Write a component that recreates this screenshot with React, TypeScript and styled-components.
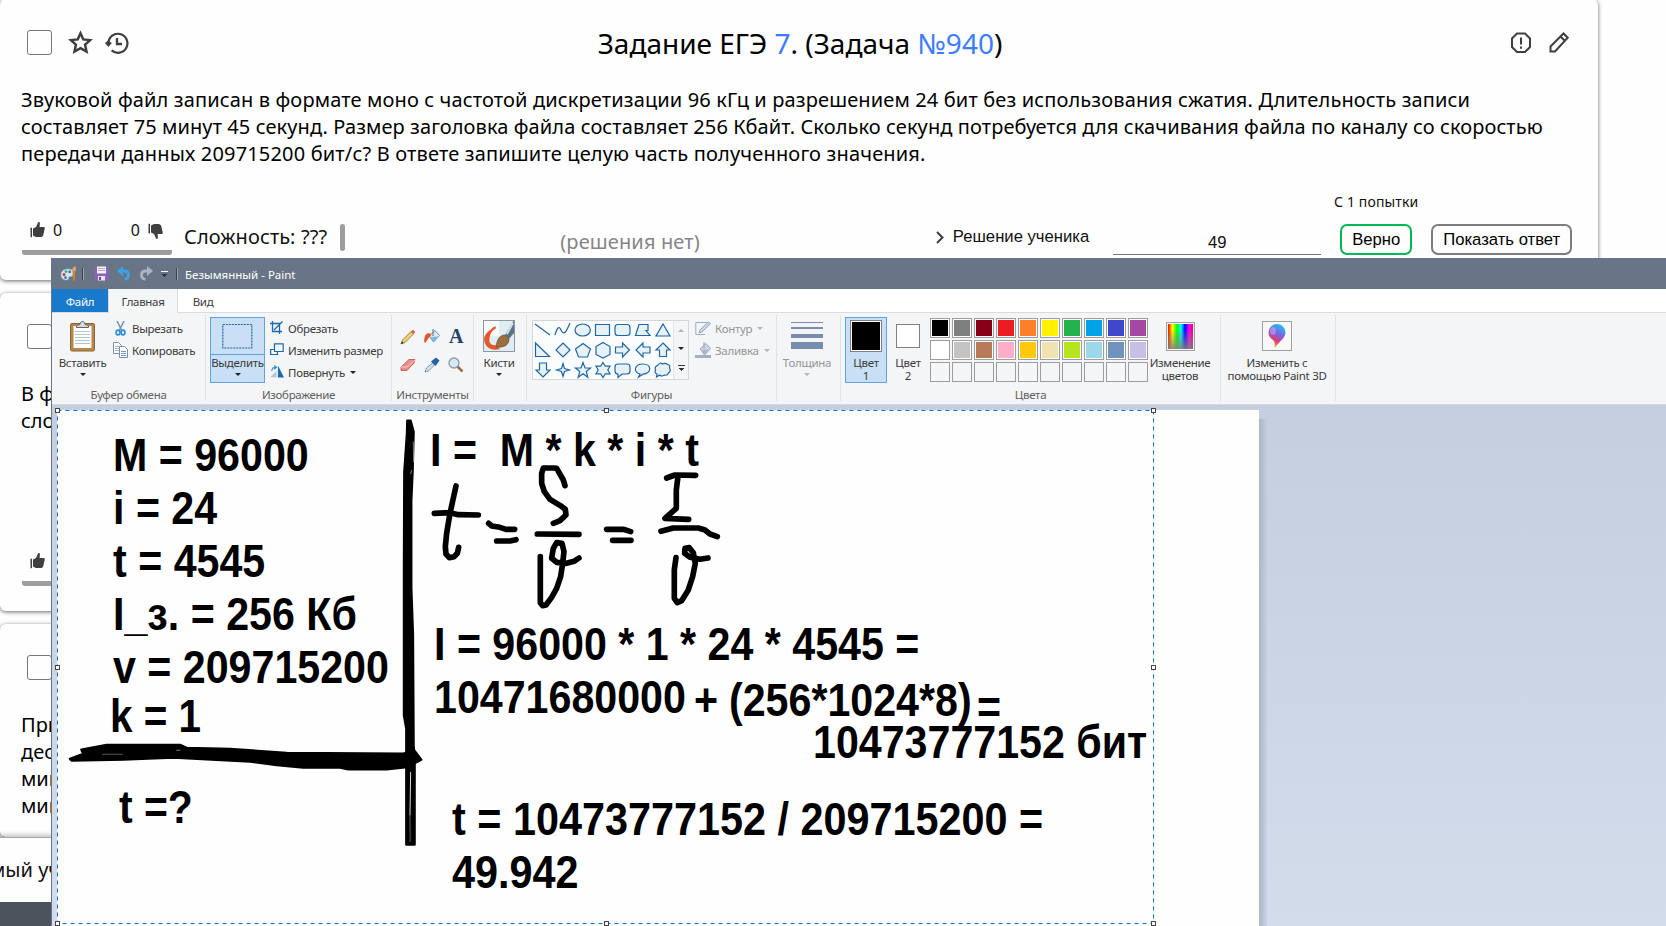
import React from 'react';
import styled, { createGlobalStyle, css } from 'styled-components';

const Global = createGlobalStyle`
  * { box-sizing: border-box; }
  body { margin: 0; background: #fefefe; font-family: "Noto Sans", sans-serif; }
  svg { display: block; flex: none; }
`;

const Page = styled.div`
  position: relative;
  width: 1666px;
  height: 926px;
  overflow: hidden;
  display: flex;
  flex-direction: column;
  gap: 13px;
  color: #111;
`;

/* ---------- task cards ---------- */

const Card = styled.section<{ $height: number; $first?: boolean }>`
  flex: none;
  width: 1598px;
  height: ${p => p.$height}px;
  margin-top: ${p => (p.$first ? '-1px' : '0')};
  padding: 0 22px 25px;
  display: flex;
  flex-direction: column;
  background: #fefefe;
  border-radius: 6px;
  box-shadow: 0 1px 4px rgba(0, 0, 0, 0.6);
`;

const CardHead = styled.header`
  flex: none;
  display: grid;
  grid-template-columns: 1fr auto 1fr;
  align-items: center;
  height: 87px;
  padding: 0 7px 0 5px;
`;

const HeadTools = styled.div<{ $end?: boolean }>`
  display: flex;
  align-items: center;
  gap: ${p => (p.$end ? 17 : 12)}px;
  justify-content: ${p => (p.$end ? 'flex-end' : 'flex-start')};
`;

const Check = styled.span`
  width: 25px;
  height: 25px;
  margin-right: 4px;
  border: 1px solid #767676;
  border-radius: 3px;
`;

const Title = styled.h1`
  margin: 0 0 0 4px;
  font-size: 28px;
  font-weight: 400;
  line-height: 40px;
  color: #000;
  white-space: nowrap;
`;

const Blue = styled.span`
  color: #3c7dff;
`;

const TaskText = styled.p`
  flex: none;
  margin: 0 0 0 -1px;
  font-size: 20px;
  line-height: 27px;
  white-space: pre;
  color: #000;
`;

const Line = styled.span<{ $ls: number }>`
  display: block;
  letter-spacing: ${p => p.$ls}px;
`;

const CardFoot = styled.footer`
  display: flex;
  align-items: flex-end;
  margin-top: auto;
  height: 62px;
`;

const Votes = styled.div`
  width: 150px;
  height: 34px;
  padding: 1px 9px 0 8px;
  border-bottom: 5px solid #9d9d9d;
  border-radius: 0 0 3px 3px;
  display: flex;
  justify-content: space-between;
  align-items: flex-start;
  font-size: 16px;
  line-height: 17px;
`;

const Vote = styled.span`
  display: flex;
  gap: 8px;
`;

const Difficulty = styled.div`
  display: flex;
  gap: 13px;
  align-items: center;
  margin: 0 0 4px 12px;
  font-size: 20px;
  line-height: 28px;
  letter-spacing: 0.1px;
`;

const Level = styled.span`
  width: 5px;
  height: 27px;
  border-radius: 3px;
  background: #9d9d9d;
`;

const NoSolution = styled.div`
  margin: 0 0 0 215px;
  font-size: 20px;
  line-height: 27px;
  letter-spacing: 0.13px;
  color: #858585;
`;

const StudentLink = styled.div`
  display: flex;
  align-items: center;
  gap: 9px;
  margin: 0 0 8px 236px;
  font: 16.67px/20px "Liberation Sans", sans-serif;
  white-space: nowrap;
`;

const Answer = styled.div`
  width: 208px;
  margin-left: 24px;
  padding-bottom: 1px;
  border-bottom: 1px solid #767676;
  font: 16.67px/20px "Liberation Sans", sans-serif;
  text-align: center;
`;

const Attempt = styled.div`
  display: flex;
  flex-direction: column;
  align-items: center;
  gap: 13px;
  width: 84px;
  margin: 0 13px;
  font-size: 14px;
  line-height: 19px;
  letter-spacing: 0.15px;
  white-space: nowrap;
`;

const Button = styled.button<{ $tone: string; $width: number }>`
  width: ${p => p.$width}px;
  height: 31px;
  padding: 0;
  border: 2px solid ${p => p.$tone};
  border-radius: 7px;
  background: none;
  font: 16.67px/20px "Liberation Sans", sans-serif;
  color: #000;
  white-space: nowrap;
`;

const SiteFooter = styled.div`
  flex: none;
  height: 89px;
  margin-top: -13px;
  border-top: 1px solid #aaa;
  border-bottom: 24px solid #4c535d;
  background: #fefefe;
  box-shadow: 0 -2px 5px rgba(0, 0, 0, 0.25);
  font-size: 20px;
  line-height: 27px;
  padding-top: 18px;
`;

const FooterText = styled.span`
  display: block;
  margin-left: -10px;
`;

/* ---------- Paint window ---------- */

const Window = styled.div`
  position: absolute;
  left: 51px;
  top: 258px;
  width: 1640px;
  height: 700px;
  border-left: 1px solid #687587;
  display: flex;
  flex-direction: column;
  font-size: 11.5px;
  line-height: 13px;
  letter-spacing: -0.3px;
  color: #3b3b3b;
`;

const TitleBar = styled.div`
  flex: none;
  height: 31px;
  display: flex;
  align-items: center;
  padding-left: 8px;
  background: #687587;
  color: #fff;
`;

const WindowTitle = styled.span`
  padding-top: 1px;
  letter-spacing: 0;
`;

const QuickTools = styled.div`
  display: flex;
  align-items: center;
  gap: 8px;
`;

const BarSep = styled.i<{ $ml: number; $mr: number }>`
  width: 2px;
  height: 12px;
  margin: 0 ${p => p.$mr}px 0 ${p => p.$ml}px;
  border-left: 1px solid #384350;
  background: #9aa5b4;
`;

const TabRow = styled.div`
  flex: none;
  height: 24px;
  display: flex;
  background: #fff;
  border-bottom: 1px solid #dadbdc;
`;

const Tab = styled.div<{ $kind: 'file' | 'active' | 'plain'; $width: number }>`
  width: ${p => p.$width}px;
  height: ${p => (p.$kind === 'active' ? 24 : 23)}px;
  line-height: 25px;
  text-align: center;
  ${p => p.$kind === 'file' && css`background: #1979ca; color: #fff;`}
  ${p => p.$kind === 'active' && css`
    background: #f4f6f8;
    border: solid #dadbdc;
    border-width: 0 1px;
  `}
`;

const Ribbon = styled.div`
  flex: none;
  height: 92px;
  display: flex;
  background: #f4f5f7;
  border-bottom: 1px solid #d6d8dc;
  padding: 2px 0 3px;
`;

const Group = styled.div<{ $width: number; $pad: number }>`
  flex: none;
  width: ${p => p.$width}px;
  padding-left: ${p => p.$pad}px;
  border-right: 1px solid #e0e2e4;
  display: flex;
  flex-direction: column;
`;

const GroupBody = styled.div`
  flex: 1;
  display: flex;
  align-items: flex-start;
  padding-top: 2px;
`;

const GroupLabel = styled.div<{ $pad: number }>`
  height: 13px;
  margin-left: -${p => p.$pad}px;
  text-align: center;
  color: #606060;
`;

const BigButton = styled.div<{ $width: number; $active?: boolean; $off?: boolean }>`
  flex: none;
  width: ${p => p.$width}px;
  height: 66px;
  display: flex;
  flex-direction: column;
  align-items: center;
  white-space: pre;
  text-align: center;
  border: 1px solid transparent;
  color: ${p => (p.$off ? '#959595' : '#3b3b3b')};
  ${p => p.$active && css`background: #c9dff5; border-color: #62a2e4;`}
`;

const BigIcon = styled.div<{ $line?: boolean }>`
  align-self: stretch;
  height: 37px;
  display: flex;
  align-items: center;
  justify-content: center;
  margin-bottom: 1px;
  border-bottom: 1px solid ${p => (p.$line ? '#62a2e4' : 'transparent')};
`;

const Arrow = styled.i<{ $off?: boolean; $mt?: number; $up?: boolean; $bar?: boolean; $light?: boolean }>`
  width: ${p => (p.$bar ? 7 : 0)}px;
  height: ${p => (p.$bar ? 6 : 0)}px;
  margin-top: ${p => p.$mt ?? 0}px;
  ${p => p.$bar
    ? css`
      border-top: 1px solid ${p.$light ? '#fff' : '#333'};
      background: linear-gradient(#333, #333) 50% 2px / 5px 1px no-repeat,
        linear-gradient(#333, #333) 50% 3px / 3px 1px no-repeat,
        linear-gradient(#333, #333) 50% 4px / 1px 1px no-repeat;
    `
    : css`
      border: 3px solid transparent;
      border-bottom-width: 0;
      border-top-color: ${p.$off ? '#b4b4b4' : '#222'};
    `}
  ${p => p.$up && css`transform: rotate(180deg);`}
`;

const Rows = styled.div<{ $ml: number }>`
  display: flex;
  flex-direction: column;
  margin-left: ${p => p.$ml}px;
`;

const RowItem = styled.div<{ $off?: boolean }>`
  height: 22px;
  display: flex;
  align-items: center;
  gap: 4px;
  white-space: nowrap;
  color: ${p => (p.$off ? '#959595' : '#3b3b3b')};
  ${Arrow} { margin-left: 1px; }
`;

const ToolGrid = styled.div`
  display: grid;
  grid-template-columns: repeat(3, 24px);
  grid-auto-rows: 28px;
  place-items: center;
  padding-top: 6px;
`;

const Gallery = styled.div`
  display: flex;
  width: 157px;
  height: 60px;
  margin-top: 3px;
  border: 1px solid #d4d6d9;
  background: #fbfcfd;
`;

const ShapeGrid = styled.div`
  display: grid;
  grid-template-columns: repeat(7, 20px);
  grid-auto-rows: 20px;
  width: 141px;
  margin-top: -1px;
  border-right: 1px solid #e2e4e6;
`;

const Scroll = styled.div`
  width: 14px;
  display: flex;
  flex-direction: column;
  justify-content: space-around;
  align-items: center;
  background: #f4f5f7;
`;

const Swatch = styled.i<{ $color?: string; $size: number; $big?: boolean }>`
  width: ${p => p.$size}px;
  height: ${p => p.$size}px;
  padding: ${p => (p.$big ? 1 : 1)}px;
  border: 1px solid ${p => (p.$big ? '#808080' : '#9d9d9d')};
  background: ${p => p.$color || 'transparent'} content-box;
  box-shadow: inset 0 0 0 1px ${p => (p.$color ? '#fdfdfd' : 'transparent')};
`;

const Palette = styled.div`
  display: grid;
  grid-template-columns: repeat(10, 20px);
  grid-auto-rows: 20px;
  gap: 2px;
  margin: 1px 0 0 1px;
`;

const Framed = styled.div<{ $size: number }>`
  width: ${p => p.$size}px;
  height: ${p => p.$size}px;
  padding: 1px;
  border: 1px solid #a0a0a0;
  background: #f8f8f8;
  display: flex;
  align-items: center;
  justify-content: center;
`;

const Rainbow = styled.i`
  width: 25px;
  height: 25px;
  background: linear-gradient(transparent 20%, rgba(128, 128, 128, 0.85)),
    linear-gradient(90deg, #f00, #ff0 18%, #0f0 36%, #0ff 52%, #00f 68%, #f0f 85%, #f04);
`;

const Workspace = styled.div`
  flex: 1;
  padding: 5px 0 0 5px;
  background: linear-gradient(#c5cedf, #d3dceb 520px);
`;

const Sheet = styled.div`
  position: relative;
  width: 1202px;
  height: 560px;
  background: #fefefe;
`;

const SheetShadow = styled.i`
  position: absolute;
  left: 1202px;
  top: 9px;
  width: 8px;
  height: 560px;
  background: linear-gradient(90deg, #a9b7c9, rgba(190, 200, 217, 0.4));
`;

const Ink = styled.svg`
  position: absolute;
  left: 0;
  top: 0;
`;

const Note = styled.div<{ $x: number; $base: number; $sx?: number }>`
  position: absolute;
  left: ${p => p.$x - 57}px;
  top: ${p => p.$base - 451.4}px;
  font: bold 47px/53px "Liberation Sans", sans-serif;
  letter-spacing: 0;
  white-space: pre;
  color: #000;
  transform: scaleX(${p => p.$sx ?? 0.876});
  transform-origin: 0 0;
`;

const Selection = styled.svg`
  position: absolute;
  left: -4px;
  top: -4px;
`;

/* ---------- icons ---------- */

const Thumb = ({ down }: { down?: boolean }) => (
  <svg width="15" height="17" viewBox="0 0 15 17" fill="#3f3f3f">
    <g transform={down ? 'matrix(1 0 0 -1 0 17)' : undefined}>
      <path d="M.4 6 2 5.600V15l-1.400.5zM3 6.600 6 5l2-4.600c.3-.6 1.700-.5 1.900.6L9.600 5h3.900c1 0 1.400.8 1.200 1.800l-1.300 5.700c-.4 1.800-1.400 2.600-3 2.600H6L3 13.600z" />
    </g>
  </svg>
);

const Star = () => (
  <svg width="25" height="25" viewBox="0 0 25 25" fill="none" stroke="#3f3f3f" strokeWidth="2.500">
    <path d="M12.500 3.200l2.800 6.200 6.800.7-5 4.600 1.400 6.800-6-3.400-6 3.400 1.400-6.800-5-4.600 6.800-.7z" />
  </svg>
);

const History = () => (
  <svg width="24" height="24" viewBox="0 0 24 24" fill="none" stroke="#3f3f3f" strokeWidth="2.200">
    <path d="M3.400 12.500A9.500 9.500 0 1 1 6.600 19.400" />
    <path d="M12 7v6h5" strokeWidth="2.300" />
    <path d="M0 12l3.400-2.500 3.400 2.500-3.400 4z" fill="#3f3f3f" stroke="none" />
  </svg>
);

const Alert = () => (
  <svg width="22" height="22" viewBox="0 0 22 22" fill="none" stroke="#3f3f3f" strokeWidth="2">
    <path d="M7 1.500h8l5 5v8.500l-5 5H7l-5-5V6.500z" />
    <path d="M11 5.500v7M11 14.500v2.200" />
  </svg>
);

const Pencil = () => (
  <svg width="20" height="21" viewBox="0 0 20 21" fill="none" stroke="#3f3f3f" strokeWidth="2">
    <path d="M1.500 19.500v-5L14.500 1.500l4.200 4.200L6 19.500zM11.500 4.500l4 4" />
  </svg>
);

const PaintLogo = () => (
  <svg width="17" height="17" viewBox="0 0 17 17">
    <path d="M1 10c0-4 3-6 7-6 5 0 6 3 5 6-1 2-3 1-4 2s0 3-2 3c-4 0-6-2-6-5z" fill="#cfe8f5" stroke="#8fb3c8" strokeWidth=".6" />
    <circle cx="4" cy="9.500" r="1.500" fill="#d33" /><circle cx="6" cy="6.600" r="1.400" fill="#4a4" />
    <circle cx="9.700" cy="6.800" r="1.500" fill="#47c" /><circle cx="5.500" cy="12.600" r="1.300" fill="#36b" />
    <path d="M12.500 6h2.800l-.4 9c-.3 1.300-1.600 1.300-1.900 0z" fill="#d97f26" />
    <path d="M12.300 6c-.4-2 .5-3.500 2.900-5 .9 2 .9 3.500.3 5z" fill="#e8a95e" />
  </svg>
);

const Save = () => (
  <svg width="15" height="15" viewBox="0 0 15 15">
    <path d="M.5.5h14v14h-12l-2-2z" fill="#8a63b4" /><path d="M3 .5h9v7H3z" fill="#f5f3f8" />
    <path d="M4 2.500h7M4 4.500h7" stroke="#b9a7cc" /><path d="M4 10h7v4.500H4z" fill="#e8e4ee" /><path d="M5 11h2v3H5z" fill="#6b4796" />
  </svg>
);

const Undo = ({ redo }: { redo?: boolean }) => (
  <svg width="14" height="15" viewBox="0 0 14 15">
    <g transform={redo ? 'matrix(-1 0 0 1 14 0)' : undefined}>
      <path d="M3 5h4c3 0 4.500 1.500 4.500 4 0 2.500-1.500 4-4 4.500" fill="none" stroke={redo ? '#a7b4c8' : '#39a5e6'} strokeWidth="2.800" />
      <path d="M0 5l6-5v10z" fill={redo ? '#a7b4c8' : '#39a5e6'} />
    </g>
  </svg>
);

const Clipboard = () => (
  <svg width="26" height="31" viewBox="0 0 26 31">
    <rect x=".5" y="2.500" width="24" height="27.500" rx="1.500" fill="#b5884c" stroke="#8d6431" />
    <path d="M3.500 5h18v22h-18z" fill="#fdfdfd" />
    <path d="M5 10.500h15M5 13.500h15M5 16.500h15M5 19.500h15M5 22.500h15" stroke="#b4c3d0" />
    <path d="M6.500 6.500V4.500L10 3.500c0-4 5-4 5 0l3.500 1v2z" fill="#d9dcde" stroke="#666" />
  </svg>
);

const Scissors = () => (
  <svg width="15" height="15" viewBox="0 0 15 15" fill="none">
    <path d="M4 0l4.500 9M11 0L6.500 9" stroke="#7d93a8" strokeWidth="1.600" />
    <ellipse cx="5" cy="11.500" rx="1.900" ry="2.400" stroke="#2b8fd8" strokeWidth="1.700" /><ellipse cx="10" cy="11.500" rx="1.900" ry="2.400" stroke="#2b8fd8" strokeWidth="1.700" />
  </svg>
);

const Copy = () => (
  <svg width="15" height="16" viewBox="0 0 15 16" stroke="#7d8ea5">
    <path d="M.5.500h5l3 3v8h-8z" fill="#fff" /><path d="M2 4.500h4M2 6.500h4M2 8.500h4" stroke="#9db4cf" />
    <path d="M6.500 4.500h5l3 3v8h-8z" fill="#fff" /><path d="M8 9.500h5M8 11.500h5M8 13.500h5" stroke="#6b9bd1" />
  </svg>
);

const Marquee = () => (
  <svg width="31" height="25" viewBox="0 0 31 25"><rect x=".8" y=".5" width="29" height="23.500" fill="none" stroke="#1d62a5" strokeWidth="1.200" strokeDasharray="2 1" /></svg>
);

const Crop = () => (
  <svg width="14" height="14" viewBox="0 0 14 14" fill="none" stroke="#1d6aa8" strokeWidth="1.300"><path d="M2.500 0v10.500H12M0 2.500h9.500V13M4 9l8.500-8.500" /></svg>
);
const Resize = () => (
  <svg width="14" height="14" viewBox="0 0 14 14" fill="#f4f9fd" stroke="#1d6aa8" strokeWidth="1.200"><path d="M.6 6.500h6.800v5H.6z" /><path d="M4.500.8h8.700v7.700H4.500z" /></svg>
);
const Rotate = () => (
  <svg width="14" height="14" viewBox="0 0 15 14"><path d="M0 12.500L7 6v6.500z" fill="#b9c4cf" /><path d="M8.500 0v13H15z" fill="#1d6aa8" /><path d="M2 6c0-3 1.500-4 4-4M4.500 0l2.500 2-2.500 2" stroke="#2b8fd8" fill="none" strokeWidth="1.200" /></svg>
);

const PencilTool = () => (
  <svg width="16" height="16" viewBox="0 0 16 16"><path d="M1 15l1.500-4L11 2.500l2.500 2.500L5 13.500z" fill="#f4d06a" stroke="#7a6a45" strokeWidth=".8" /><path d="M1 15l1-2.500 1.500 1.500z" fill="#222" /><path d="M11 2.500L13 .800 15.300 3l-1.800 2z" fill="#d65c50" /></svg>
);
const Bucket = ({ off }: { off?: boolean }) => (
  <svg width="16" height="16" viewBox="0 0 16 16">
    <path d="M5 7l6-5.500 4.500 5-6 6.500z" fill={off ? '#cfd7e4' : '#dbeaf5'} stroke={off ? '#93a1b8' : '#5d87a8'} strokeWidth=".9" />
    <path d="M7 8l8-.5-5.500 6z" fill={off ? '#a9b6cb' : '#7cb8e0'} /><path d="M9 0v7" stroke={off ? '#93a1b8' : '#5c6e7d'} />
    {off ? <path d="M0 13h16v3H0z" fill="#a3afc6" /> : <path d="M6.500 4.500C3 3.500 0 5 .2 13.500c2.500 1 3-4.500 6.800-6.500z" fill="#e3572d" />}
  </svg>
);
const Eraser = () => (
  <svg width="16" height="14" viewBox="0 0 16 14"><path d="M1 9l8-7.500h6L14 5 7 12.500H1z" fill="#ee8d89" stroke="#ad5450" strokeWidth=".8" /><path d="M1 9h6l8-7" stroke="#fbc8c5" fill="none" /></svg>
);
const Picker = () => (
  <svg width="16" height="16" viewBox="0 0 16 16"><path d="M1 15l1.500-4 6-5 2 2-6 6z" fill="#cfe4f2" stroke="#6a7d8c" strokeWidth=".8" /><path d="M7 4.500L12 .5l3.500 3-4 5.500z" fill="#22639f" /></svg>
);
const Magnifier = () => (
  <svg width="16" height="16" viewBox="0 0 16 16"><path d="M9.500 9.500l5 5" stroke="#9c6b46" strokeWidth="2.500" /><circle cx="6" cy="6" r="5" fill="#d3ebf8" stroke="#8a9aa6" strokeWidth="1.300" /></svg>
);

const Brush = () => (
  <svg width="32" height="32" viewBox="0 0 32 32">
    <rect x=".5" y=".5" width="31" height="31" fill="#dfeef4" stroke="#8f979e" />
    <path d="M1 1h15v15H1z" fill="#f7fafb" />
    <path d="M12.500 6c-1.500 1.500-3 1-4 3C4 12 0 16 1.500 22c2 7 9 9 16 7-3-1-3-4-4-4-5 1-8-2-7-7C7 14 9 11 11 9.500c2 0 2-2 1.500-3.500z" fill="#e8562a" />
    <path d="M22 15l8.500-14H31v12l-5 6z" fill="#5b7188" /><path d="M24 14l6-11" stroke="#dbe4ec" strokeWidth="1.800" />
    <path d="M13 27c1-8 4-12 9-12l4 4c0 6-5 9-13 8z" fill="#9b6f3f" stroke="#6d4a26" strokeWidth=".7" />
  </svg>
);

const shapes = [
  'M2 4L17 15', 'M2 15c2-7 4-10 6-5 3 7 6 0 9-7',
  'M2 10a7.700 6 0 1 0 15.400 0a7.700 6 0 1 0-15.400 0', 'M2.500 4.500h14v11h-14z',
  'M5 4.500h9q3 0 3 3v5q0 3-3 3H5q-3 0-3-3v-5q0-3 3-3z', 'M6 4.500h9v6h-2l4 5H2.500z', 'M10 4L17 16H3z',
  'M2.500 3v13.500h14z', 'M10 3l7 7-7 7-7-7z', 'M10 3.500l7.500 5.500-3 8h-9l-3-8z', 'M10 2.500l7 4v8l-7 3.500-7-3.500v-8z',
  'M2.500 7h7V3l7 7-7 7v-4h-7z', 'M17 7h-7V3l-7 7 7 7v-4h7z', 'M10 3l7 7h-3.500v6.500h-7V10H3z',
  'M10 17l7-7h-3.500V3h-7v7H3z', 'M10 3.500l1.500 5L16.500 10l-5 1.500L10 16.500l-1.500-5L3.500 10l5-1.500z',
  'M10 2.500l2 5.500h5.500l-4.300 3.500 1.600 5.700-4.800-3.500L5.200 17.200 6.800 11.500 2.500 8H8z',
  'M10 2.500l2.300 3.700H17L14.800 10l2.200 3.800h-4.700L10 17.500l-2.300-3.700H3L5.200 10 3 6.200h4.700z',
  'M5 4h9q3 0 3 3v4q0 3-3 3H9l-4 3.500V14q-3 0-3-3V7q0-3 3-3z',
  'M7 14C0 12 1 4 10 4s9 9.500 0 10.200L5.500 17z',
  'M5 5q2-3 4.500-1 3-1.500 5 .5 3 .500 2 3.500 2 3-1 5-1 3-4 2-3 2-5 0l-3 2 .5-3q-3-1-1.500-4-1.500-3 2.500-5z',
];

const Shape = ({ d, line }: { d: string; line: boolean }) => (
  <svg width="20" height="20" viewBox="0 0 20 20"><path d={d} fill={line ? 'none' : '#e7f2f8'} stroke="#1f66a3" strokeWidth="1.200" /></svg>
);

const OutlineIcon = () => (
  <svg width="16" height="15" viewBox="0 0 16 15"><path d="M12 1.500H.800v12H10" fill="none" stroke="#9eabc1" /><path d="M4 12l1-3L13.500.800l2 2L7 11z" fill="#cfd6e2" stroke="#93a1b8" strokeWidth=".9" /></svg>
);

const LineWidths = () => (
  <svg width="32" height="28" viewBox="0 0 32 28" fill="#788cae"><path d="M0 0h32v1H0zM0 5h32v2H0zM0 12h32v4H0zM0 20h32v7H0z" /></svg>
);

const Balloon = () => (
  <svg width="20" height="26" viewBox="0 0 20 26">
    <defs><linearGradient id="balloon" x1=".7" y1="0" x2=".3" y2="1"><stop offset="0" stopColor="#17c8ec" /><stop offset=".4" stopColor="#7a63e4" /><stop offset=".7" stopColor="#e03d74" /><stop offset="1" stopColor="#ffb300" /></linearGradient></defs>
    <path d="M10 1a8.500 8.500 0 0 1 8.500 8.500c0 6-6.500 9-11 15.500.500-4 .5-5-1-7.500C3 15 1.500 13 1.500 9.500A8.500 8.500 0 0 1 10 1z" fill="url(#balloon)" />
    <ellipse cx="6" cy="8" rx="3" ry="4" fill="#b9a6f5" opacity=".6" />
  </svg>
);

const colors = [
  '#000000', '#7f7f7f', '#880015', '#ed1c24', '#ff7f27', '#fff200', '#22b14c', '#00a2e8', '#3f48cc', '#a349a4',
  '#ffffff', '#c3c3c3', '#b97a57', '#ffaec9', '#ffc90e', '#efe4b0', '#b5e61d', '#99d9ea', '#7092be', '#c8bfe7',
];
const cells: (string | undefined)[] = [...colors, ...new Array(10).fill(undefined)];

const handles = [[4.5, 4.5], [553.5, 4.5], [1100.5, 4.5], [4.5, 261.5], [1100.5, 261.5], [4.5, 517.5], [553.5, 517.5], [1100.5, 517.5]];

/* ---------- page ---------- */

export default function App() {
  return (
    <Page>
      <Global />
      <Card $height={281} $first>
        <CardHead>
          <HeadTools><Check /><Star /><History /></HeadTools>
          <Title>Задание ЕГЭ <Blue>7</Blue>. (Задача <Blue>№940</Blue>)</Title>
          <HeadTools $end><Alert /><Pencil /></HeadTools>
        </CardHead>
        <TaskText>
          <Line $ls={0.135}>Звуковой файл записан в формате моно с частотой дискретизации 96 кГц и разрешением 24 бит без использования сжатия. Длительность записи</Line>
          <Line $ls={0.09}>составляет 75 минут 45 секунд. Размер заголовка файла составляет 256 Кбайт. Сколько секунд потребуется для скачивания файла по каналу со скоростью</Line>
          <Line $ls={0.165}>передачи данных 209715200 бит/с? В ответе запишите целую часть полученного значения.</Line>
        </TaskText>
        <CardFoot>
          <Votes><Vote><Thumb />0</Vote><Vote>0<Thumb down /></Vote></Votes>
          <Difficulty>Сложность: ???<Level /></Difficulty>
          <NoSolution>(решения нет)</NoSolution>
          <StudentLink>
            <svg width="8" height="13" viewBox="0 0 8 13" fill="none" stroke="#3f3f3f" strokeWidth="2"><path d="M1 1l5.500 5.500L1 12" /></svg>
            Решение ученика
          </StudentLink>
          <Answer>49</Answer>
          <Attempt>С 1 попытки<Button $tone="#00b956" $width={72}>Верно</Button></Attempt>
          <Button $tone="#7d7d7d" $width={141}>Показать ответ</Button>
        </CardFoot>
      </Card>

      <Card $height={318}>
        <CardHead><HeadTools><Check /></HeadTools></CardHead>
        <TaskText>{'В файле\nсловами'}</TaskText>
        <CardFoot><Votes><Vote><Thumb /></Vote></Votes></CardFoot>
      </Card>

      <Card $height={213}>
        <CardHead><HeadTools><Check /></HeadTools></CardHead>
        <TaskText>{'При\nдес\nмин\nмин'}</TaskText>
      </Card>
      <SiteFooter><FooterText>мый уч</FooterText></SiteFooter>

      <Window>
        <TitleBar>
          <PaintLogo /><BarSep $ml={5} $mr={10} />
          <QuickTools><Save /><Undo /><Undo redo /><Arrow $bar $light /></QuickTools>
          <BarSep $ml={8} $mr={7} />
          <WindowTitle>Безымянный - Paint</WindowTitle>
        </TitleBar>
        <TabRow>
          <Tab $kind="file" $width={56}>Файл</Tab>
          <Tab $kind="active" $width={70}>Главная</Tab>
          <Tab $kind="plain" $width={50}>Вид</Tab>
        </TabRow>
        <Ribbon>
          <Group $width={154} $pad={4}>
            <GroupBody>
              <BigButton $width={53}><BigIcon><Clipboard /></BigIcon>Вставить<Arrow $mt={4} /></BigButton>
              <Rows $ml={4}><RowItem><Scissors />Вырезать</RowItem><RowItem><Copy />Копировать</RowItem></Rows>
            </GroupBody>
            <GroupLabel $pad={4}>Буфер обмена</GroupLabel>
          </Group>
          <Group $width={186} $pad={4}>
            <GroupBody>
              <BigButton $width={55} $active><BigIcon $line><Marquee /></BigIcon>Выделить<Arrow $mt={4} /></BigButton>
              <Rows $ml={5}>
                <RowItem><Crop />Обрезать</RowItem>
                <RowItem><Resize />Изменить размер</RowItem>
                <RowItem><Rotate />Повернуть<Arrow /></RowItem>
              </Rows>
            </GroupBody>
            <GroupLabel $pad={4}>Изображение</GroupLabel>
          </Group>
          <Group $width={82} $pad={4}>
            <GroupBody>
              <ToolGrid><PencilTool /><Bucket />
                <svg width="16" height="16" viewBox="0 0 16 16"><text x="8" y="14" textAnchor="middle" fontFamily="Liberation Serif, serif" fontWeight="bold" fontSize="20" fill="#24436b">A</text></svg>
                <Eraser /><Picker /><Magnifier /></ToolGrid>
            </GroupBody>
            <GroupLabel $pad={4}>Инструменты</GroupLabel>
          </Group>
          <Group $width={53} $pad={0}>
            <GroupBody><BigButton $width={50}><BigIcon><Brush /></BigIcon>Кисти<Arrow $mt={4} /></BigButton></GroupBody>
          </Group>
          <Group $width={250} $pad={5}>
            <GroupBody>
              <Gallery>
                <ShapeGrid>{shapes.map((d, i) => <Shape key={i} d={d} line={i < 2} />)}</ShapeGrid>
                <Scroll><Arrow $off $up /><Arrow /><Arrow $bar /></Scroll>
              </Gallery>
              <Rows $ml={6}>
                <RowItem $off><OutlineIcon />Контур<Arrow $off /></RowItem>
                <RowItem $off><Bucket off />Заливка<Arrow $off /></RowItem>
              </Rows>
            </GroupBody>
            <GroupLabel $pad={5}>Фигуры</GroupLabel>
          </Group>
          <Group $width={64} $pad={3}>
            <GroupBody><BigButton $width={54} $off><BigIcon><LineWidths /></BigIcon>Толщина<Arrow $off $mt={4} /></BigButton></GroupBody>
          </Group>
          <Group $width={380} $pad={4}>
            <GroupBody>
              <BigButton $width={42} $active><BigIcon><Swatch $size={32} $color="#000" $big /></BigIcon>{'Цвет\n1'}</BigButton>
              <BigButton $width={42}><BigIcon><Swatch $size={24} $color="#fff" $big /></BigIcon>{'Цвет\n2'}</BigButton>
              <Palette>{cells.map((c, i) => <Swatch key={i} $size={20} $color={c} />)}</Palette>
              <BigButton $width={64}><BigIcon><Framed $size={29}><Rainbow /></Framed></BigIcon>{'Изменение\nцветов'}</BigButton>
            </GroupBody>
            <GroupLabel $pad={4}>Цвета</GroupLabel>
          </Group>
          <Group $width={115} $pad={3}>
            <GroupBody><BigButton $width={106}><BigIcon><Framed $size={30}><Balloon /></Framed></BigIcon>{'Изменить с\nпомощью Paint 3D'}</BigButton></GroupBody>
          </Group>
        </Ribbon>
        <Workspace>
          <Sheet>
            <SheetShadow />
            <Ink width="1202" height="516" viewBox="57 410 1202 516">
              <g transform="translate(0 400) scale(.3333 .33546)" strokeLinejoin="round" strokeLinecap="round">
                <path d="M1222 62L1221 100 1213 215 1212 500 1212 940 1219 980 1219 1325 1244 1325 1244 1060 1241 1035 1239 700 1234 560 1234 300 1238 210 1241 95 1232 62z" stroke="#000" strokeWidth="7" />
                <path d="M210 1070L250 1055 244 1042 320 1028 540 1028 560 1037 690 1040 860 1052 1210 1054 1243 1045 1264 1072 1245 1082 1215 1095 1160 1101 1045 1101 1020 1096 910 1096 830 1088 750 1078 520 1066 370 1072 215 1075z" stroke="#000" strokeWidth="7" />
                <path d="M307 1056h60" stroke="#888" strokeWidth="2" />
                <path d="M1240 125l1 60M1235 210l-3 10M530 1044h10" stroke="#bbb" strokeWidth="2" />
                <path d="M1232 1110L1230 1240" stroke="#ddd" strokeWidth="3" /><path d="M1230 1240L1231 1315" stroke="#333" strokeWidth="6" />
              </g>
              <g transform="translate(400 400) scale(.3333)" fill="none" stroke="#000" strokeWidth="17" strokeLinejoin="round" strokeLinecap="round">
                <path d="M168 258L150 340 140 400 136 440 138 462 148 473 162 470 172 460 176 442M103 340L150 338 175 344 235 345" />
                <path d="M266 370L275 378 300 382 318 388 344 388M290 423L330 423 348 419" />
                <path d="M495 257L490 240 470 205 460 204 430 204 425 220 425 250 433 275 450 298 480 316 496 328 498 345 480 362 460 370" />
                <path d="M412 402L537 403" />
                <path d="M421 470L421 608 428 617 438 615 455 592 470 565 482 530 488 490 492 455 486 430 470 428 460 445 455 475 470 487 500 490 522 484 537 474" />
                <path d="M620 388L670 388 692 395M638 421L693 421" />
                <path d="M800 234L825 225 887 226M834 230L829 270 829 325 795 355 866 358" />
                <path d="M783 394L820 384 895 384 915 390 930 402 952 410" />
                <path d="M828 473L823 510 823 595 832 608 845 602 865 570 878 530 886 490 880 458 868 443 855 445 854 460 870 472 900 478 924 474" />
              </g>
            </Ink>
            <Note $x={113.3} $base={469.8}>{'M = 96000\ni = 24\nt = 4545\nI_з. = 256 Кб\nv = 209715200'}</Note>
            <Note $x={110} $base={730} $sx={0.86}>k = 1</Note>
            <Note $x={119} $base={821.3} $sx={0.87}>t =?</Note>
            <Note $x={430} $base={464.7}>{'I =  M * k * i * t'}</Note>
            <Note $x={433.500} $base={658}>{'I = 96000 * 1 * 24 * 4545 =\n10471680000'}</Note>
            <Note $x={694} $base={714}>+</Note>
            <Note $x={729} $base={714.7}>(256*1024*8)</Note>
            <Note $x={977} $base={721.3}>=</Note>
            <Note $x={812.500} $base={756}>10473777152 бит</Note>
            <Note $x={452} $base={833.3} $sx={0.88}>{'t = 10473777152 / 209715200 =\n49.942'}</Note>
            <Selection width="1110" height="522" viewBox="0 0 1110 522">
              <rect x="4.500" y="4.500" width="1096" height="513" fill="none" stroke="#0a6fc2" strokeDasharray="4 4" />
              {handles.map(([x, y], i) => <rect key={i} x={x - 2} y={y - 2} width="4" height="4" fill="#fff" stroke="#444" />)}
            </Selection>
          </Sheet>
        </Workspace>
      </Window>
    </Page>
  );
}
